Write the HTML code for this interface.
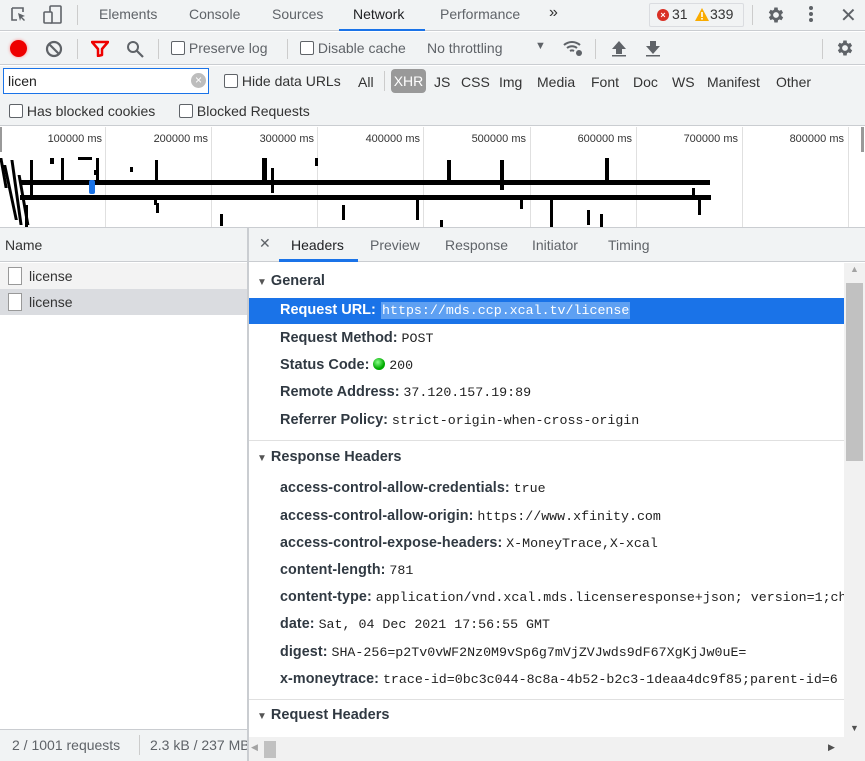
<!DOCTYPE html>
<html><head><meta charset="utf-8"><style>
*{box-sizing:border-box;margin:0;padding:0}
body{width:865px;height:761px;overflow:hidden;background:#fff;font-family:"Liberation Sans",sans-serif;font-size:14px;color:#333;position:relative}
.a{position:absolute}
.bar{background:#f1f3f4;border-bottom:1px solid #cacdd1}
.cb{display:inline-block;width:14px;height:14px;border:1px solid #5f6368;border-radius:2px;background:#fff;vertical-align:-2px}
.t{color:#333;white-space:nowrap}
.sep{width:1px;background:#ccc}
.mono{font-family:"Liberation Mono",monospace;font-size:13.3px;color:#222}
.k{font-weight:bold;color:#303942;font-size:14.5px}
.kr{font-weight:bold;color:#303942;font-size:14.3px;letter-spacing:0.1px}
.row{position:absolute;left:280px;white-space:nowrap}
.tick{position:absolute;background:#000}
.gl{position:absolute;top:127px;width:1px;height:101px;background:#e0e0e0}
.lab{position:absolute;top:133px;font-size:11px;color:#333;text-align:right;width:90px}
</style></head><body>
<div class="a bar" style="left:0;top:0;width:865px;height:31px"></div>
<svg class="a" style="left:9px;top:5px" width="20" height="20" viewBox="0 0 20 20"><path d="M3 3h11v4M3 3v12h5" fill="none" stroke="#5f6368" stroke-width="1.6"/><path d="M9 8l7 3-3 1 3 3-1 1-3-3-1 3z" fill="#5f6368"/></svg>
<svg class="a" style="left:42px;top:4px" width="22" height="22" viewBox="0 0 22 22"><rect x="8" y="2" width="11" height="17" rx="1" fill="none" stroke="#5f6368" stroke-width="1.6"/><rect x="2" y="8" width="8" height="11" rx="1" fill="#f1f3f4" stroke="#5f6368" stroke-width="1.6"/></svg>
<div class="a sep" style="left:77px;top:5px;height:20px"></div>
<div class="a t" style="left:99px;top:6px;color:#5f6368">Elements</div>
<div class="a t" style="left:189px;top:6px;color:#5f6368">Console</div>
<div class="a t" style="left:272px;top:6px;color:#5f6368">Sources</div>
<div class="a t" style="left:353px;top:6px;color:#202124">Network</div>
<div class="a" style="left:339px;top:29px;width:86px;height:2px;background:#1a73e8"></div>
<div class="a t" style="left:440px;top:6px;color:#5f6368">Performance</div>
<div class="a t" style="left:549px;top:4px;color:#333;font-size:16px">»</div>
<div class="a" style="left:649px;top:3px;width:95px;height:24px;border:1px solid #dadce0;border-radius:2px;background:#f1f3f4"></div>
<div class="a" style="left:657px;top:9px;width:12px;height:12px;border-radius:50%;background:#d93025;color:#fff;font-size:9px;line-height:12px;text-align:center;font-weight:bold">×</div>
<div class="a t" style="left:672px;top:6px">31</div>
<svg class="a" style="left:695px;top:8px" width="14" height="13"><path d="M7 0L14 13H0z" fill="#f9ab00"/><rect x="6.2" y="4" width="1.6" height="5" fill="#fff"/><rect x="6.2" y="10" width="1.6" height="1.6" fill="#fff"/></svg>
<div class="a t" style="left:710px;top:6px">339</div>
<div class="a sep" style="left:752px;top:5px;height:20px"></div>
<svg class="a" style="left:766px;top:5px" width="20" height="20" viewBox="0 0 24 24"><path fill="#5f6368" d="M19.4 13a7.5 7.5 0 000-2l2.1-1.6-2-3.5-2.5 1a7 7 0 00-1.7-1L15 3h-4l-.4 2.7a7 7 0 00-1.7 1l-2.5-1-2 3.5L6.5 11a7.5 7.5 0 000 2l-2.1 1.6 2 3.5 2.5-1a7 7 0 001.7 1L11 21h4l.4-2.7a7 7 0 001.7-1l2.5 1 2-3.5zM13 15.5a3.5 3.5 0 110-7 3.5 3.5 0 010 7z" transform="translate(-1 0)"/></svg>
<div class="a" style="left:809px;top:6px;width:4px;height:4px;border-radius:50%;background:#5f6368;box-shadow:0 6px 0 #5f6368,0 12px 0 #5f6368"></div>
<div class="a t" style="left:840px;top:3px;font-size:20px;color:#5f6368">✕</div>
<div class="a bar" style="left:0;top:32px;width:865px;height:33px"></div>
<div class="a" style="left:10px;top:40px;width:17px;height:17px;border-radius:50%;background:#e00;box-shadow:0 0 3px #f88"></div>
<svg class="a" style="left:45px;top:40px" width="18" height="18"><circle cx="9" cy="9" r="7" fill="none" stroke="#5f6368" stroke-width="2.2"/><path d="M4 4l10 10" stroke="#5f6368" stroke-width="2.2"/></svg>
<div class="a sep" style="left:77px;top:39px;height:20px"></div>
<svg class="a" style="left:91px;top:40px" width="18" height="17"><path d="M1 2h16l-6 7v6l-4 1V9z" fill="none" stroke="#e00" stroke-width="2.5" stroke-linejoin="round"/></svg>
<svg class="a" style="left:126px;top:40px" width="18" height="18"><circle cx="7" cy="7" r="5" fill="none" stroke="#5f6368" stroke-width="2"/><path d="M11 11l6 6" stroke="#5f6368" stroke-width="2.2"/></svg>
<div class="a sep" style="left:158px;top:39px;height:20px"></div>
<div class="a t" style="left:171px;top:40px"><span class="cb"></span> <span style="color:#5f6368">Preserve log</span></div>
<div class="a sep" style="left:287px;top:39px;height:20px"></div>
<div class="a t" style="left:300px;top:40px"><span class="cb"></span> <span style="color:#5f6368">Disable cache</span></div>
<div class="a t" style="left:427px;top:40px;color:#5f6368">No throttling</div>
<div class="a t" style="left:535px;top:40px;font-size:11px;color:#5f6368">▼</div>
<svg class="a" style="left:562px;top:39px" width="22" height="18"><path d="M2 6a12 12 0 0116 0M5 9a8 8 0 0110 0M8 12a4 4 0 014 0" fill="none" stroke="#5f6368" stroke-width="2"/><circle cx="17" cy="14" r="3" fill="#5f6368"/></svg>
<div class="a sep" style="left:595px;top:39px;height:20px"></div>
<svg class="a" style="left:611px;top:40px" width="16" height="17"><path d="M8 1L1 9h4v5h6V9h4z" fill="#5f6368"/><rect x="1" y="15" width="14" height="1.5" fill="#5f6368"/></svg>
<svg class="a" style="left:645px;top:40px" width="16" height="17"><path d="M8 14L1 6h4V1h6v5h4z" fill="#5f6368"/><rect x="1" y="15" width="14" height="1.5" fill="#5f6368"/></svg>
<div class="a sep" style="left:822px;top:39px;height:20px"></div>
<svg class="a" style="left:835px;top:38px" width="20" height="20" viewBox="0 0 24 24"><path fill="#5f6368" d="M19.4 13a7.5 7.5 0 000-2l2.1-1.6-2-3.5-2.5 1a7 7 0 00-1.7-1L15 3h-4l-.4 2.7a7 7 0 00-1.7 1l-2.5-1-2 3.5L6.5 11a7.5 7.5 0 000 2l-2.1 1.6 2 3.5 2.5-1a7 7 0 001.7 1L11 21h4l.4-2.7a7 7 0 001.7-1l2.5 1 2-3.5zM13 15.5a3.5 3.5 0 110-7 3.5 3.5 0 010 7z" transform="translate(-1 0)"/></svg>
<div class="a" style="left:0;top:66px;width:865px;height:60px;background:#f1f3f4;border-bottom:1px solid #cacdd1"></div>
<div class="a" style="left:3px;top:68px;width:206px;height:26px;border:1px solid #1a73e8;background:#fff"></div>
<div class="a t" style="left:8px;top:73px;color:#222">licen</div>
<div class="a" style="left:191px;top:73px;width:15px;height:15px;border-radius:50%;background:#bdbdbd;color:#fff;font-size:12px;line-height:15px;text-align:center">×</div>
<div class="a t" style="left:224px;top:73px"><span class="cb"></span> <span style="color:#333">Hide data URLs</span></div>
<div class="a t" style="left:358px;top:74px">All</div>
<div class="a sep" style="left:384px;top:71px;height:20px"></div>
<div class="a" style="left:391px;top:69px;width:35px;height:24px;border-radius:4px;background:#999;color:#fff;text-align:center;line-height:24px">XHR</div>
<div class="a t" style="left:434px;top:74px">JS</div>
<div class="a t" style="left:461px;top:74px">CSS</div>
<div class="a t" style="left:499px;top:74px">Img</div>
<div class="a t" style="left:537px;top:74px">Media</div>
<div class="a t" style="left:591px;top:74px">Font</div>
<div class="a t" style="left:633px;top:74px">Doc</div>
<div class="a t" style="left:672px;top:74px">WS</div>
<div class="a t" style="left:707px;top:74px">Manifest</div>
<div class="a t" style="left:776px;top:74px">Other</div>
<div class="a t" style="left:9px;top:103px"><span class="cb"></span> <span>Has blocked cookies</span></div>
<div class="a t" style="left:179px;top:103px"><span class="cb"></span> <span>Blocked Requests</span></div>
<div class="gl" style="left:105px"></div><div class="gl" style="left:211px"></div><div class="gl" style="left:317px"></div><div class="gl" style="left:423px"></div><div class="gl" style="left:530px"></div><div class="gl" style="left:636px"></div><div class="gl" style="left:742px"></div><div class="gl" style="left:848px"></div>
<div class="a" style="left:0;top:127px;width:2px;height:25px;background:#999"></div>
<div class="a" style="left:861px;top:127px;width:3px;height:25px;background:#999"></div>
<div class="lab" style="left:12px">100000 ms</div><div class="lab" style="left:118px">200000 ms</div><div class="lab" style="left:224px">300000 ms</div><div class="lab" style="left:330px">400000 ms</div><div class="lab" style="left:436px">500000 ms</div><div class="lab" style="left:542px">600000 ms</div><div class="lab" style="left:648px">700000 ms</div><div class="lab" style="left:754px">800000 ms</div>
<div class="tick" style="left:20px;top:180px;width:690px;height:5px"></div>
<div class="tick" style="left:20px;top:195px;width:691px;height:5px"></div>
<div class="a" style="left:89px;top:180px;width:6px;height:14px;background:#1a73e8;border-radius:2px"></div>
<div class="tick" style="left:2px;top:158px;width:3px;height:30px;transform:skewX(10deg)"></div>
<div class="tick" style="left:9px;top:165px;width:3px;height:55px;transform:skewX(12deg)"></div>
<div class="tick" style="left:15px;top:160px;width:3px;height:65px;transform:skewX(8deg)"></div>
<div class="tick" style="left:22px;top:175px;width:3px;height:50px;transform:skewX(10deg)"></div>
<div class="tick" style="left:30px;top:160px;width:3px;height:40px"></div>
<div class="tick" style="left:25px;top:205px;width:3px;height:23px"></div>
<div class="tick" style="left:78px;top:157px;width:14px;height:3px"></div>
<div class="tick" style="left:50px;top:158px;width:4px;height:6px"></div>
<div class="tick" style="left:61px;top:158px;width:3px;height:22px"></div>
<div class="tick" style="left:96px;top:158px;width:3px;height:22px"></div>
<div class="tick" style="left:94px;top:170px;width:5px;height:5px"></div>
<div class="tick" style="left:155px;top:160px;width:3px;height:25px"></div>
<div class="tick" style="left:156px;top:203px;width:3px;height:10px"></div>
<div class="tick" style="left:130px;top:167px;width:3px;height:5px"></div>
<div class="tick" style="left:220px;top:214px;width:3px;height:12px"></div>
<div class="tick" style="left:154px;top:195px;width:3px;height:10px"></div>
<div class="tick" style="left:262px;top:158px;width:5px;height:25px"></div>
<div class="tick" style="left:271px;top:168px;width:3px;height:25px"></div>
<div class="tick" style="left:315px;top:158px;width:3px;height:8px"></div>
<div class="tick" style="left:342px;top:205px;width:3px;height:15px"></div>
<div class="tick" style="left:416px;top:200px;width:3px;height:20px"></div>
<div class="tick" style="left:440px;top:220px;width:3px;height:8px"></div>
<div class="tick" style="left:447px;top:160px;width:4px;height:20px"></div>
<div class="tick" style="left:500px;top:160px;width:4px;height:30px"></div>
<div class="tick" style="left:520px;top:195px;width:3px;height:14px"></div>
<div class="tick" style="left:550px;top:200px;width:3px;height:28px"></div>
<div class="tick" style="left:587px;top:210px;width:3px;height:15px"></div>
<div class="tick" style="left:600px;top:214px;width:3px;height:14px"></div>
<div class="tick" style="left:605px;top:158px;width:4px;height:25px"></div>
<div class="tick" style="left:692px;top:188px;width:3px;height:10px"></div>
<div class="tick" style="left:698px;top:195px;width:3px;height:20px"></div>
<div class="a" style="left:0;top:227px;width:865px;height:1px;background:#cacdd1"></div>
<div class="a" style="left:0;top:228px;width:248px;height:34px;background:#f1f3f4;border-bottom:1px solid #cacdd1"></div>
<div class="a t" style="left:5px;top:237px">Name</div>
<div class="a" style="left:0;top:263px;width:248px;height:26px;background:#f3f3f3"></div>
<div class="a" style="left:0;top:289px;width:248px;height:26px;background:#dadce0"></div>
<div class="a" style="left:8px;top:267px;width:14px;height:18px;border:1px solid #999;background:#fff"></div>
<div class="a t" style="left:29px;top:268px">license</div>
<div class="a" style="left:8px;top:293px;width:14px;height:18px;border:1px solid #999;background:#fff"></div>
<div class="a t" style="left:29px;top:294px">license</div>
<div class="a" style="left:0;top:729px;width:248px;height:32px;background:#f1f3f4;border-top:1px solid #cacdd1"></div>
<div class="a t" style="left:12px;top:737px;color:#5f6368">2 / 1001 requests</div>
<div class="a sep" style="left:139px;top:735px;height:20px"></div>
<div class="a t" style="left:150px;top:737px;color:#5f6368;width:98px;overflow:hidden">2.3 kB / 237 MB</div>
<div class="a" style="left:247px;top:228px;width:2px;height:533px;background:#cacdd1"></div>
<div class="a" style="left:249px;top:228px;width:616px;height:34px;background:#f1f3f4;border-bottom:1px solid #cacdd1"></div>
<div class="a t" style="left:259px;top:235px;color:#5f6368">✕</div>
<div class="a t" style="left:291px;top:237px;color:#202124">Headers</div>
<div class="a" style="left:279px;top:259px;width:79px;height:3px;background:#1a73e8"></div>
<div class="a t" style="left:370px;top:237px;color:#5f6368">Preview</div>
<div class="a t" style="left:445px;top:237px;color:#5f6368">Response</div>
<div class="a t" style="left:532px;top:237px;color:#5f6368">Initiator</div>
<div class="a t" style="left:608px;top:237px;color:#5f6368">Timing</div>
<div class="a t k" style="left:257px;top:273px"><span style="font-size:10px;color:#555">▼</span> General</div>
<div class="a" style="left:249px;top:298px;width:595px;height:26px;background:#1a73e8"></div>
<div class="row k" style="top:302px;color:#fff">Request URL:</div>
<div class="a mono" style="left:381px;top:302px;background:#5ea0f2;color:#fff;padding:1px 1px">https://mds.ccp.xcal.tv/license</div>
<div class="row" style="top:329px"><span class="k">Request Method:</span> <span class="mono">POST</span></div>
<div class="row" style="top:356px"><span class="k">Status Code:</span> <span style="display:inline-block;width:12px;height:12px;border-radius:50%;background:radial-gradient(circle at 40% 35%,#8f8,#0a0 60%);vertical-align:-1px"></span> <span class="mono">200</span></div>
<div class="row" style="top:383px"><span class="k">Remote Address:</span> <span class="mono">37.120.157.19:89</span></div>
<div class="row" style="top:411px"><span class="k">Referrer Policy:</span> <span class="mono">strict-origin-when-cross-origin</span></div>
<div class="a" style="left:249px;top:440px;width:595px;height:1px;background:#e0e0e0"></div>
<div class="a t k" style="left:257px;top:449px"><span style="font-size:10px;color:#555">▼</span> Response Headers</div>
<div class="a" style="left:249px;top:470px;width:595px;height:230px;overflow:hidden">
<div class="row" style="left:31px;top:9px"><span class="kr">access-control-allow-credentials:</span> <span class="mono">true</span></div>
<div class="row" style="left:31px;top:37px"><span class="kr">access-control-allow-origin:</span> <span class="mono">https://www.xfinity.com</span></div>
<div class="row" style="left:31px;top:64px"><span class="kr">access-control-expose-headers:</span> <span class="mono">X-MoneyTrace,X-xcal</span></div>
<div class="row" style="left:31px;top:91px"><span class="kr">content-length:</span> <span class="mono">781</span></div>
<div class="row" style="left:31px;top:118px"><span class="kr">content-type:</span> <span class="mono">application/vnd.xcal.mds.licenseresponse+json; version=1;charset=utf-8</span></div>
<div class="row" style="left:31px;top:145px"><span class="kr">date:</span> <span class="mono">Sat, 04 Dec 2021 17:56:55 GMT</span></div>
<div class="row" style="left:31px;top:173px"><span class="kr">digest:</span> <span class="mono">SHA-256=p2Tv0vWF2Nz0M9vSp6g7mVjZVJwds9dF67XgKjJw0uE=</span></div>
<div class="row" style="left:31px;top:200px"><span class="kr">x-moneytrace:</span> <span class="mono">trace-id=0bc3c044-8c8a-4b52-b2c3-1deaa4dc9f85;parent-id=6</span></div>
</div>
<div class="a" style="left:249px;top:699px;width:595px;height:1px;background:#e0e0e0"></div>
<div class="a t k" style="left:257px;top:707px"><span style="font-size:10px;color:#555">▼</span> Request Headers</div>
<div class="a" style="left:844px;top:263px;width:21px;height:474px;background:#f1f1f1"></div>
<div class="a" style="left:846px;top:283px;width:17px;height:178px;background:#c1c1c1"></div>
<div class="a t" style="left:850px;top:264px;font-size:9px;color:#a3a3a3">▲</div>
<div class="a t" style="left:850px;top:723px;font-size:9px;color:#505050">▼</div>
<div class="a" style="left:249px;top:737px;width:616px;height:24px;background:#f1f1f1"></div>
<div class="a" style="left:264px;top:741px;width:12px;height:17px;background:#c1c1c1"></div>
<div class="a t" style="left:251px;top:742px;font-size:9px;color:#a3a3a3">◀</div>
<div class="a t" style="left:828px;top:742px;font-size:9px;color:#505050">▶</div>
</body></html>
